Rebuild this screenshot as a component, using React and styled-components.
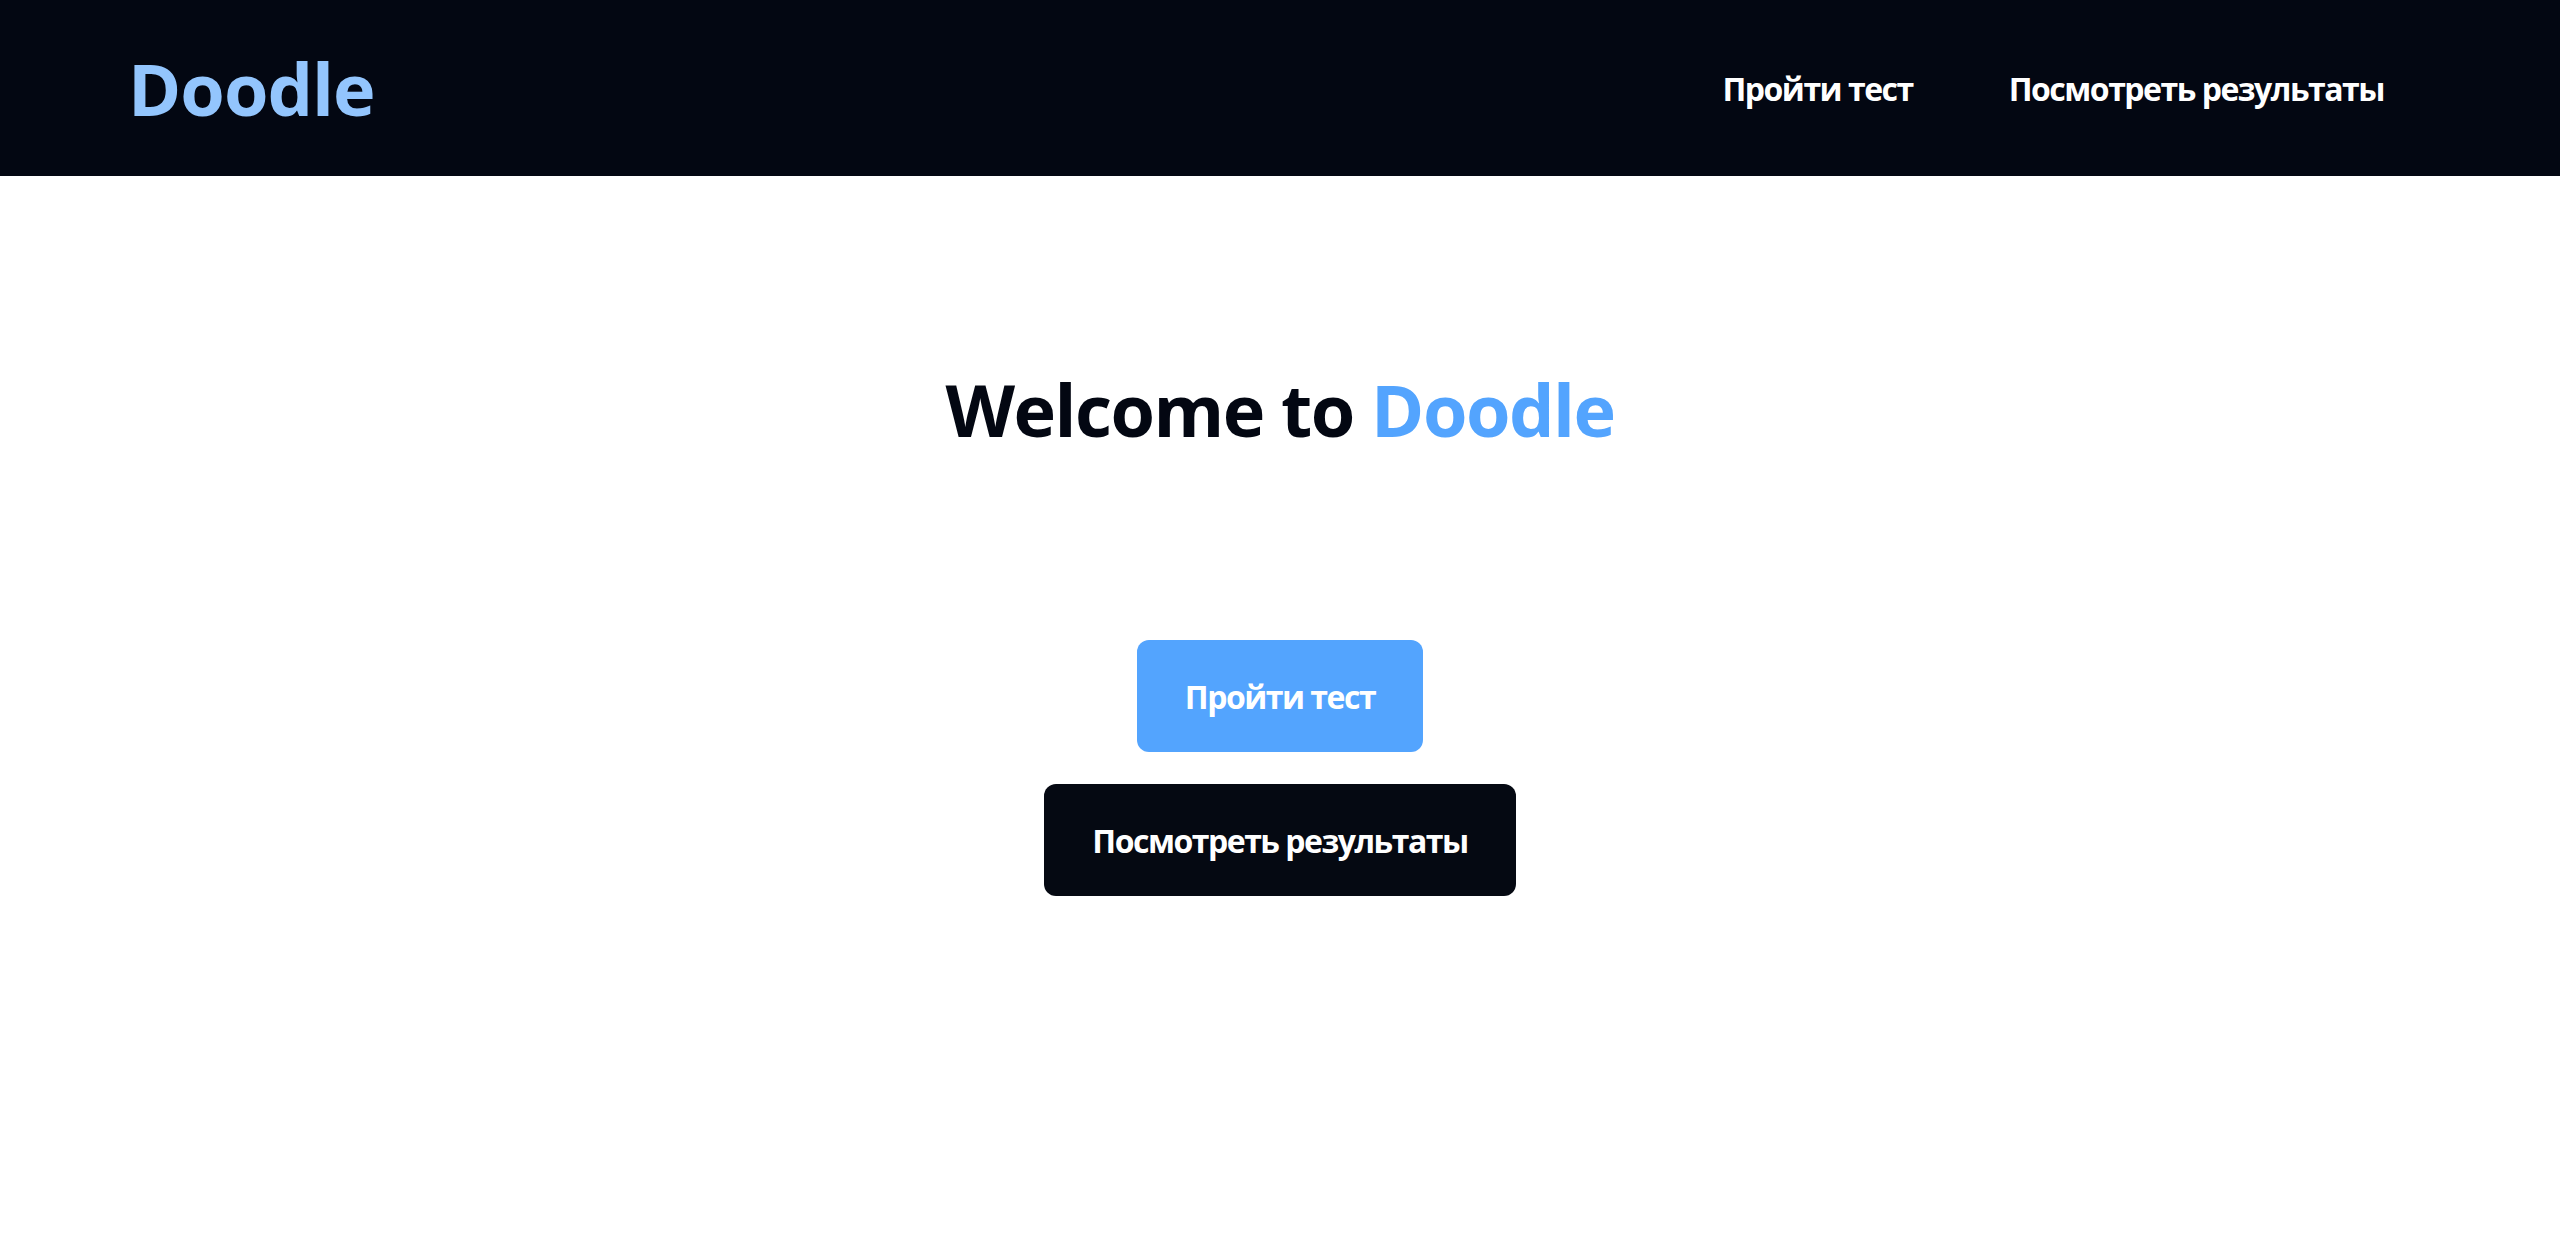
import React from "react";
import styled, { createGlobalStyle } from "styled-components";

const GlobalStyle = createGlobalStyle`
  body {
    margin: 0;
    background: #fff;
    font-family: "Open Sans", "Noto Sans", sans-serif;
  }
`;

const Header = styled.header`
  height: 176px;
  background-color: #030712;
  display: flex;
  align-items: center;
  justify-content: space-between;
  padding: 0 128px;
`;

const Logo = styled.a`
  font-size: 72px;
  font-weight: 700;
  color: #93c5fd;
  text-decoration: none;
  line-height: 1;
  letter-spacing: -1px;
`;

const Nav = styled.nav`
  display: flex;
  align-items: center;
`;

const NavLink = styled.a`
  padding: 0 48px;
  font-size: 32px;
  font-weight: 700;
  color: #fff;
  text-decoration: none;
  letter-spacing: -1.5px;
`;

const Main = styled.main`
  display: flex;
  flex-direction: column;
  align-items: center;
  padding-top: 190px;
`;

const Title = styled.h1`
  margin: 0;
  font-size: 72px;
  line-height: 1.2;
  font-weight: 700;
  color: #030712;
  letter-spacing: -1.5px;
`;

const Accent = styled.span`
  color: #53a4fe;
`;

const Actions = styled.div`
  margin-top: 188px;
  display: flex;
  flex-direction: column;
  align-items: center;
  gap: 32px;
`;

const Button = styled.button`
  height: 112px;
  padding: 0 48px;
  border: none;
  border-radius: 12px;
  background-color: ${(props) => (props.$primary ? "#53a4fe" : "#050912")};
  color: #fff;
  font-family: inherit;
  font-size: 32px;
  font-weight: 700;
  letter-spacing: -1.5px;
  cursor: pointer;
`;

function App() {
  return (
    <>
      <GlobalStyle />
      <Header>
        <Logo href="#">Doodle</Logo>
        <Nav>
          <NavLink href="#">Пройти тест</NavLink>
          <NavLink href="#">Посмотреть результаты</NavLink>
        </Nav>
      </Header>
      <Main>
        <Title>
          Welcome to <Accent>Doodle</Accent>
        </Title>
        <Actions>
          <Button $primary>Пройти тест</Button>
          <Button>Посмотреть результаты</Button>
        </Actions>
      </Main>
    </>
  );
}

export default App;
